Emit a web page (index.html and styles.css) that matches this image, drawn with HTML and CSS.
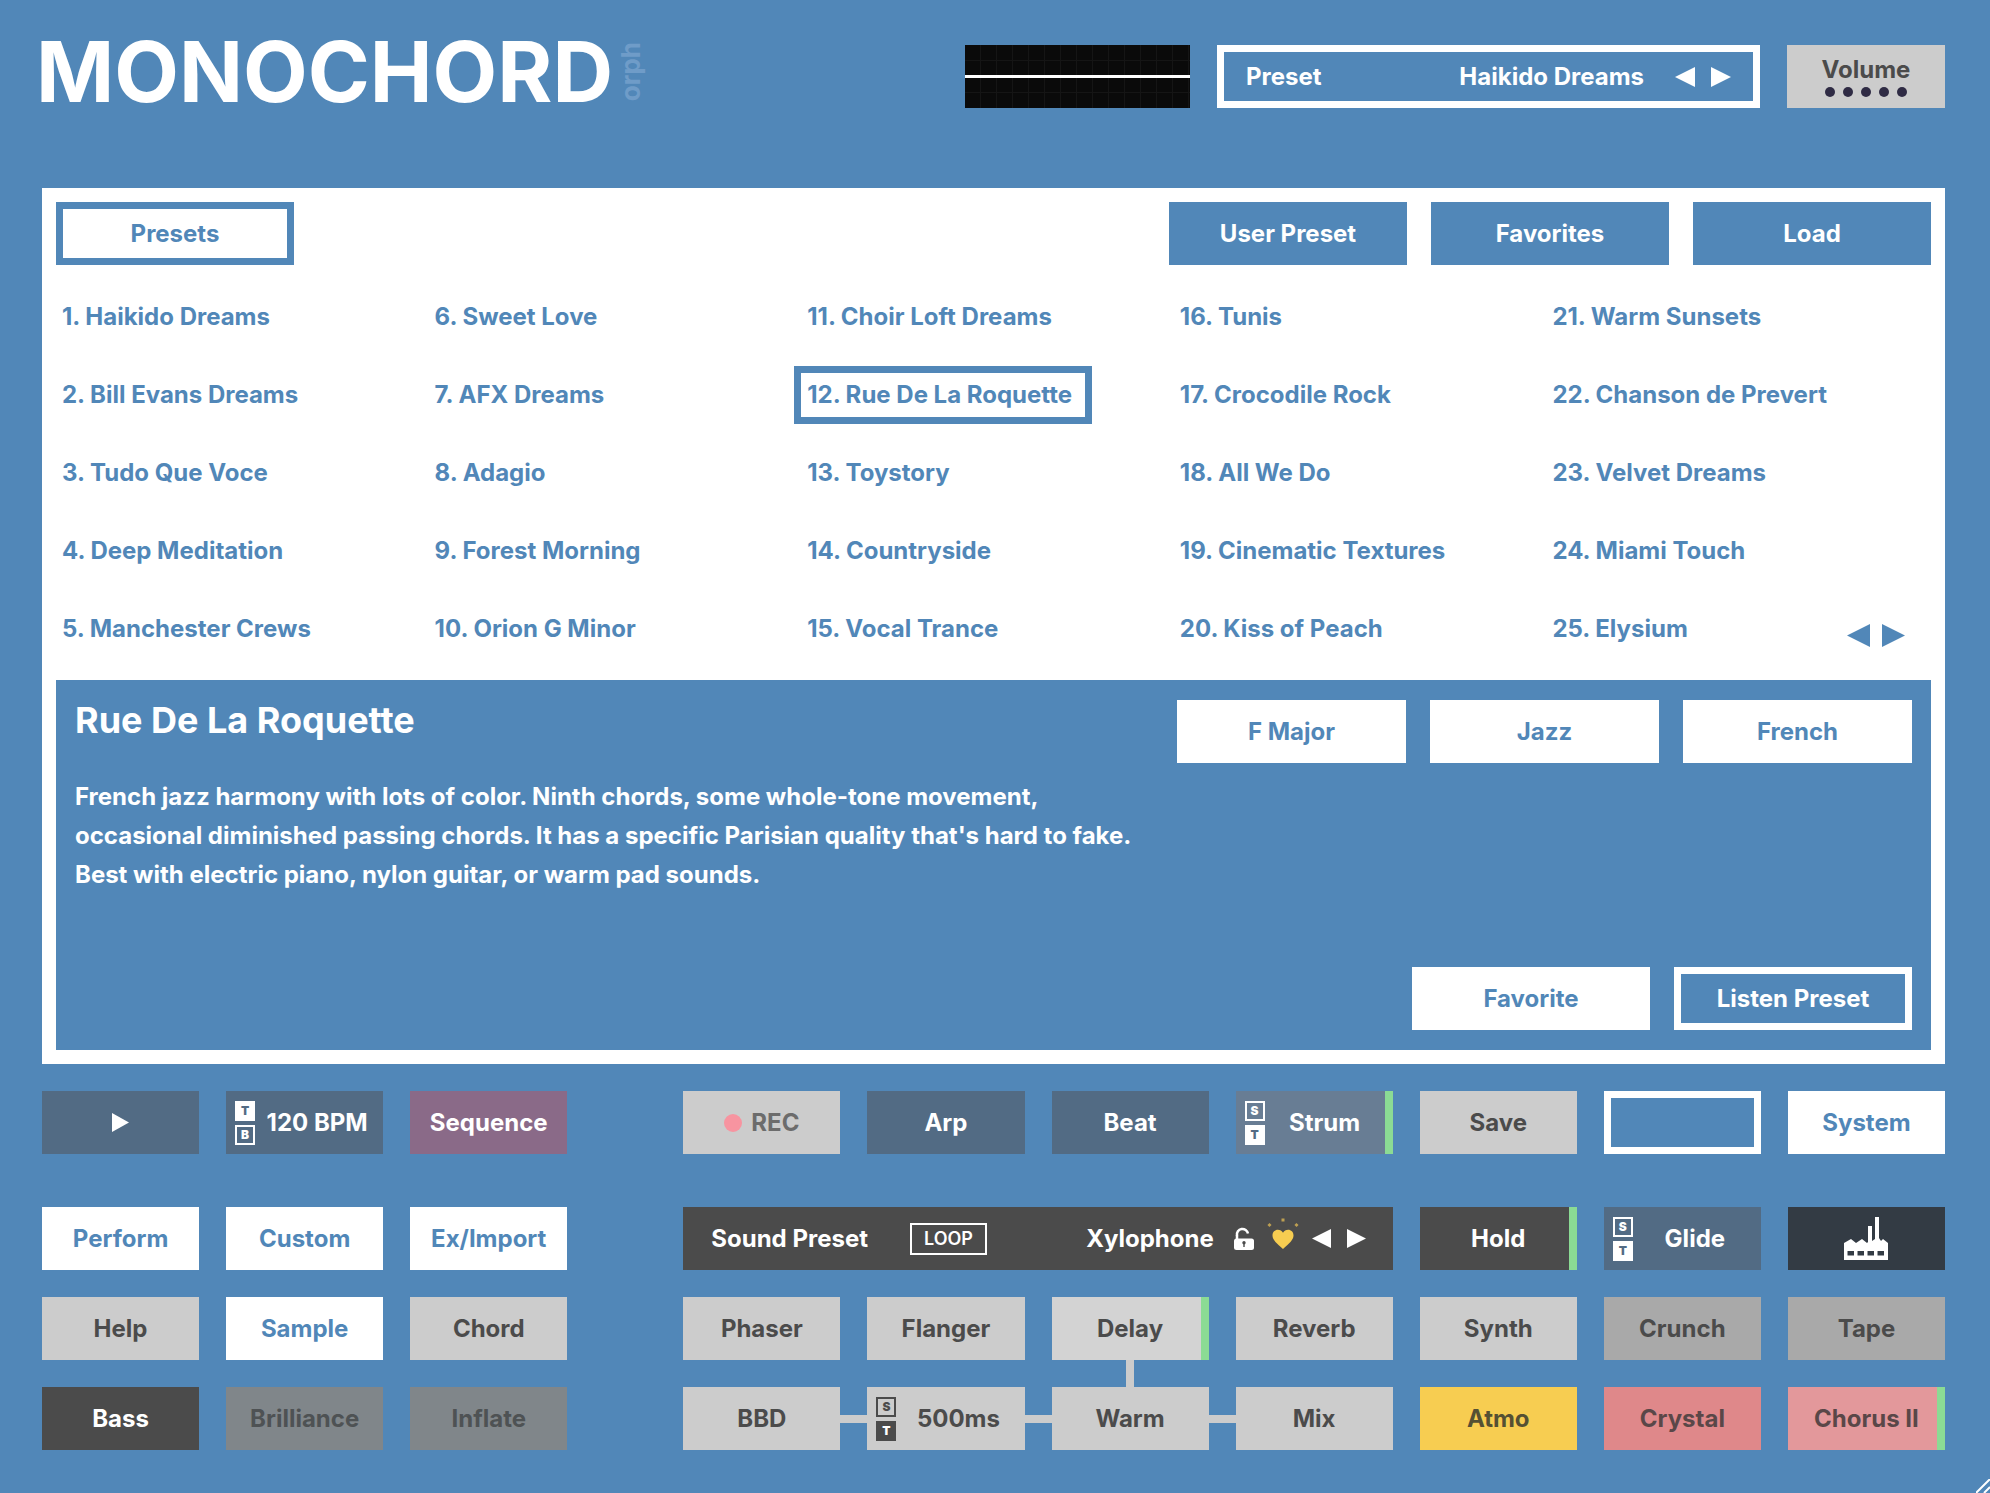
FILE: index.html
```html
<!DOCTYPE html>
<html lang="en">
<head>
<meta charset="utf-8">
<meta name="viewport" content="width=device-width, initial-scale=1">
<title>Monochord</title>
<link rel="stylesheet" href="styles.css">
</head>
<body>
<svg class="defs" aria-hidden="true">
  <symbol id="left" viewBox="0 0 20 20" preserveAspectRatio="none"><path d="M20 0v20L0 10z"/></symbol>
  <symbol id="right" viewBox="0 0 20 20" preserveAspectRatio="none"><path d="M0 0v20l20-10z"/></symbol>
</svg>
<div class="app">
  <header class="header">
    <h1 class="logo">MONOCHORD<span class="logo-sub">orph</span></h1>
    <div class="scope"></div>
    <div class="preset-bar">
      <span>Preset</span>
      <span class="push">Haikido Dreams</span>
      <span class="arrows">
        <button class="arrow" aria-label="Previous preset"><svg><use href="#left"/></svg></button>
        <button class="arrow" aria-label="Next preset"><svg><use href="#right"/></svg></button>
      </span>
    </div>
    <button class="key light volume">Volume<span class="dots"><i></i><i></i><i></i><i></i><i></i></span></button>
  </header>

  <main class="panel">
    <nav class="tabs">
      <button class="key tab current">Presets</button>
      <button class="key tab push">User Preset</button>
      <button class="key tab">Favorites</button>
      <button class="key tab">Load</button>
    </nav>
    <div class="browser">
      <ol class="list">
        <li><button class="item">1. Haikido Dreams</button></li>
        <li><button class="item">2. Bill Evans Dreams</button></li>
        <li><button class="item">3. Tudo Que Voce</button></li>
        <li><button class="item">4. Deep Meditation</button></li>
        <li><button class="item">5. Manchester Crews</button></li>
        <li><button class="item">6. Sweet Love</button></li>
        <li><button class="item">7. AFX Dreams</button></li>
        <li><button class="item">8. Adagio</button></li>
        <li><button class="item">9. Forest Morning</button></li>
        <li><button class="item">10. Orion G Minor</button></li>
        <li><button class="item">11. Choir Loft Dreams</button></li>
        <li><button class="item selected">12. Rue De La Roquette</button></li>
        <li><button class="item">13. Toystory</button></li>
        <li><button class="item">14. Countryside</button></li>
        <li><button class="item">15. Vocal Trance</button></li>
        <li><button class="item">16. Tunis</button></li>
        <li><button class="item">17. Crocodile Rock</button></li>
        <li><button class="item">18. All We Do</button></li>
        <li><button class="item">19. Cinematic Textures</button></li>
        <li><button class="item">20. Kiss of Peach</button></li>
        <li><button class="item">21. Warm Sunsets</button></li>
        <li><button class="item">22. Chanson de Prevert</button></li>
        <li><button class="item">23. Velvet Dreams</button></li>
        <li><button class="item">24. Miami Touch</button></li>
        <li><button class="item">25. Elysium</button></li>
      </ol>
      <div class="arrows pager">
        <button class="arrow" aria-label="Previous page"><svg><use href="#left"/></svg></button>
        <button class="arrow" aria-label="Next page"><svg><use href="#right"/></svg></button>
      </div>
    </div>
    <section class="detail">
      <div class="detail-top">
        <h2 class="title">Rue De La Roquette</h2>
        <div class="tags">
          <button class="key white tag">F Major</button>
          <button class="key white tag">Jazz</button>
          <button class="key white tag">French</button>
        </div>
      </div>
      <p class="text">French jazz harmony with lots of color. Ninth chords, some whole-tone movement,<br>occasional diminished passing chords. It has a specific Parisian quality that's hard to fake.<br>Best with electric piano, nylon guitar, or warm pad sounds.</p>
      <div class="actions">
        <button class="key white action">Favorite</button>
        <button class="key outline action">Listen Preset</button>
      </div>
    </section>
  </main>

  <section class="deck">
    <button class="key slate" aria-label="Play"><svg class="play"><use href="#right"/></svg></button>
    <button class="key slate split"><span class="modes"><b class="on">T</b><b>B</b></span><span class="label">120 BPM</span></button>
    <button class="key plum">Sequence</button>
    <button class="key light rec right-start"><i class="rec-dot"></i>REC</button>
    <button class="key slate">Arp</button>
    <button class="key slate">Beat</button>
    <button class="key slate-lit split active"><span class="modes"><b>S</b><b class="on">T</b></span><span class="label">Strum</span></button>
    <button class="key light">Save</button>
    <button class="key outline" aria-label="Empty slot"></button>
    <button class="key white">System</button>
  </section>

  <section class="deck">
    <button class="key white">Perform</button>
    <button class="key white">Custom</button>
    <button class="key white">Ex/Import</button>
    <div class="sound-bar right-start">
      <span>Sound Preset</span>
      <button class="loop">LOOP</button>
      <span class="push">Xylophone</span>
      <button class="icon" aria-label="Unlock">
        <svg class="lock" viewBox="0 0 20 23"><path d="M3 8.500a5.500 5.500 0 1 1 11-2" fill="none" stroke="#fff" stroke-width="2.500"/><path d="M3 8v5" stroke="#fff" stroke-width="2.500"/><rect y="11.500" width="20" height="11.500" rx="2.500"/><circle cx="10" cy="15.800" r="1.700" fill="#4b4b4b"/><path d="M9.300 16h1.400v4H9.300z" fill="#4b4b4b"/></svg>
      </button>
      <button class="icon heart" aria-label="Favorite sound">
        <svg class="heart-svg" viewBox="0 0 32 32"><path d="M16 32C10 26.500 5.500 23 5.500 18.500c0-3.500 2.500-5.700 5.300-5.700 2.300 0 4.100 1.100 5.200 3 1.100-1.900 2.900-3 5.200-3 2.800 0 5.300 2.200 5.300 5.700C26.500 23 22 26.500 16 32z"/><path d="M16 1.500v3M1.500 7l2 2M30.500 7l-2 2" fill="none" stroke="#bd9f52" stroke-width="3"/></svg>
      </button>
      <span class="arrows small">
        <button class="arrow" aria-label="Previous sound"><svg><use href="#left"/></svg></button>
        <button class="arrow" aria-label="Next sound"><svg><use href="#right"/></svg></button>
      </span>
    </div>
    <button class="key dark active">Hold</button>
    <button class="key slate split"><span class="modes"><b>S</b><b class="on">T</b></span><span class="label">Glide</span></button>
    <button class="key night" aria-label="Factory">
      <svg class="factory" viewBox="0 0 44 43"><path fill-rule="evenodd" d="M0 43V26l7-4 5 4 6-4 5 4 1-1V9h4v15l3-2V0h4v21l2 3 2-2 5 4v17zM3.500 34v4.500H10V34zm10 0v4.500H20V34zm10 0v4.500H30V34zm10 0v4.500H40V34z"/></svg>
    </button>

    <button class="key light">Help</button>
    <button class="key white">Sample</button>
    <button class="key light">Chord</button>
    <button class="key light right-start">Phaser</button>
    <button class="key light">Flanger</button>
    <button class="key light-lit active link-down">Delay</button>
    <button class="key light">Reverb</button>
    <button class="key light">Synth</button>
    <button class="key mid">Crunch</button>
    <button class="key mid">Tape</button>

    <button class="key dark">Bass</button>
    <button class="key dim">Brilliance</button>
    <button class="key dim">Inflate</button>
    <button class="key light link right-start">BBD</button>
    <button class="key light split link"><span class="modes"><b>S</b><b class="on">T</b></span><span class="label">500ms</span></button>
    <button class="key light link">Warm</button>
    <button class="key light">Mix</button>
    <button class="key yellow">Atmo</button>
    <button class="key red">Crystal</button>
    <button class="key red-lit active">Chorus II</button>
  </section>
</div>
<svg class="grip" viewBox="0 0 14 14" aria-hidden="true"><path d="M0 14 14 0M8 14l6-6"/></svg>
</body>
</html>
```
FILE: styles.css
```css
:root {
  --blue: #5187b8;
  --ink: #4b4b4b;
  --gap: 27px;
  --key: 63px;
}

* { box-sizing: border-box; }

body {
  margin: 0;
  background: var(--blue);
  color: #fff;
  font: 700 24px/28px Inter, "Liberation Sans", sans-serif;
}

button {
  margin: 0;
  padding: 0;
  border: 0;
  background: none;
  color: inherit;
  font: inherit;
  cursor: pointer;
}

svg { display: block; fill: currentColor; }
.defs { position: absolute; width: 0; height: 0; }

.app {
  min-height: 100vh;
  padding: 45px 45px 43px 42px;
  display: flex;
  flex-direction: column;
}

.push { margin-left: auto; }

/* Header */
.header {
  display: flex;
  gap: var(--gap);
  margin-bottom: 80px;
}

.logo {
  flex: 1;
  display: flex;
  align-items: center;
  gap: 5px;
  height: 54px;
  margin: 0 0 0 -6px;
  font-size: 84px;
  line-height: 56px;
}

.logo-sub {
  writing-mode: vertical-rl;
  transform: rotate(180deg);
  color: #6f9cc8;
  font-size: 26px;
  line-height: 26px;
}

.scope {
  width: 225px;
  height: var(--key);
  background:
    linear-gradient(#fff, #fff) 0 50% / 100% 3px no-repeat,
    repeating-linear-gradient(90deg, transparent 0 15px, #151515 15px 16px),
    repeating-linear-gradient(transparent 0 15px, #151515 15px 16px),
    #0a0a0a;
}

.preset-bar {
  display: flex;
  align-items: center;
  width: 543px;
  height: var(--key);
  padding: 0 22px;
  border: 7px solid #fff;
}

.arrows { display: flex; gap: 16px; margin-left: 31px; }
.arrow svg { width: 20px; height: 20px; }

.volume {
  width: 158px;
  flex-direction: column;
  line-height: 26px;
}
.dots { display: flex; gap: 8px; padding-top: 4px; }
.dots i { width: 10px; height: 10px; border-radius: 50%; background: #2f2b44; }

/* Keys */
.key {
  position: relative;
  display: flex;
  align-items: center;
  justify-content: center;
  height: var(--key);
  white-space: nowrap;
}
.white { background: #fff; color: var(--blue); }
.outline { border: 7px solid #fff; }
.light { background: #ccc; color: var(--ink); }
.light-lit { background: #d3d3d3; color: var(--ink); }
.mid { background: #a9a9a9; color: var(--ink); }
.dim { background: #80868a; color: #4e5254; }
.dark { background: var(--ink); }
.night { background: #333b44; }
.slate { background: #526b84; }
.slate-lit { background: #687d94; }
.plum { background: #8a6a88; }
.yellow { background: #f7cd51; color: #555033; }
.red { background: #df888a; color: #5a4748; }
.red-lit { background: #e3989b; color: #5a4748; }
.active { box-shadow: inset -8px 0 #8bdb94; }

/* Preset browser */
.panel {
  padding: 14px;
  background: #fff;
  color: var(--blue);
}

.tabs { display: flex; gap: 24px; }
.tab { width: 238px; background: var(--blue); color: #fff; }
.current { background: #fff; color: var(--blue); border: 7px solid var(--blue); }

.browser { position: relative; padding: 13px 0 12px; }

.list {
  display: grid;
  grid-template-rows: repeat(5, 78px);
  grid-auto-flow: column;
  grid-auto-columns: 1fr;
  margin: 0 12px 0 0;
  padding: 0;
  list-style: none;
}
.list li { display: flex; align-items: center; min-width: 0; }
.item {
  height: 58px;
  padding: 0 6px;
  white-space: nowrap;
}
.selected {
  margin-left: -7px;
  padding: 0 13px 0 6px;
  border: 7px solid var(--blue);
}
.pager { position: absolute; right: 26px; bottom: 33px; gap: 12px; }
.pager .arrow svg { width: 23px; height: 23px; }

.detail {
  display: flex;
  flex-direction: column;
  min-height: 370px;
  padding: 20px 19px;
  background: var(--blue);
  color: #fff;
}
.detail-top { display: flex; justify-content: space-between; }
.title { margin: 0; font-size: 36px; line-height: 40px; }
.tags, .actions { display: flex; gap: 24px; }
.tag { width: 229px; }
.text { margin: 14px 0 0; line-height: 39px; }
.actions { margin-top: auto; justify-content: flex-end; }
.action { width: 238px; }

/* Key decks */
.deck {
  display: grid;
  grid-template-columns: repeat(3, 1fr) 62px repeat(7, 1fr);
  gap: var(--gap);
  margin-top: var(--gap);
}
.deck + .deck { margin-top: 53px; }
.right-start { grid-column-start: 5; }

.play { width: 17px; height: 19px; }

.split { padding: 0 4px 0 9px; }
.split.active { padding-right: 8px; }
.label { flex: 1; text-align: center; }
.modes { display: flex; flex-direction: column; gap: 4px; }
.modes b {
  width: 20px;
  height: 20px;
  border: 2px solid #fff;
  font-size: 12px;
  line-height: 16px;
  text-align: center;
}
.modes .on { background: #fff; color: #526b84; }
.light .modes b { border-color: var(--ink); }
.light .modes .on { background: var(--ink); color: #fff; }

.rec { gap: 9px; color: #6c6c6c; }
.rec-dot { width: 18px; height: 18px; border-radius: 50%; background: #f794a0; }

.sound-bar {
  grid-column-end: span 4;
  display: flex;
  align-items: center;
  padding: 0 27px 0 28px;
  background: var(--ink);
}
.loop {
  width: 77px;
  height: 32px;
  margin-left: 42px;
  border: 2px solid #fff;
  font-size: 18px;
  font-weight: 600;
  line-height: 20px;
}
.icon { margin-left: 20px; }
.lock { width: 20px; height: 23px; }
.heart { margin: -12px 0 0 13px; color: #f7cd51; }
.heart-svg { width: 32px; height: 32px; }
.small { margin-left: 13px; }
.small .arrow svg { width: 19px; height: 19px; }

.factory { width: 44px; height: 43px; }

/* Signal path between effect keys */
.link::after,
.link-down::after {
  content: "";
  position: absolute;
  background: #ccc;
}
.link::after { left: 100%; width: var(--gap); height: 8px; }
.link-down::after { top: 100%; width: 8px; height: var(--gap); }

.grip {
  position: fixed;
  right: 0;
  bottom: 0;
  width: 14px;
  height: 14px;
  stroke: #fff;
  stroke-width: 2;
}
```
